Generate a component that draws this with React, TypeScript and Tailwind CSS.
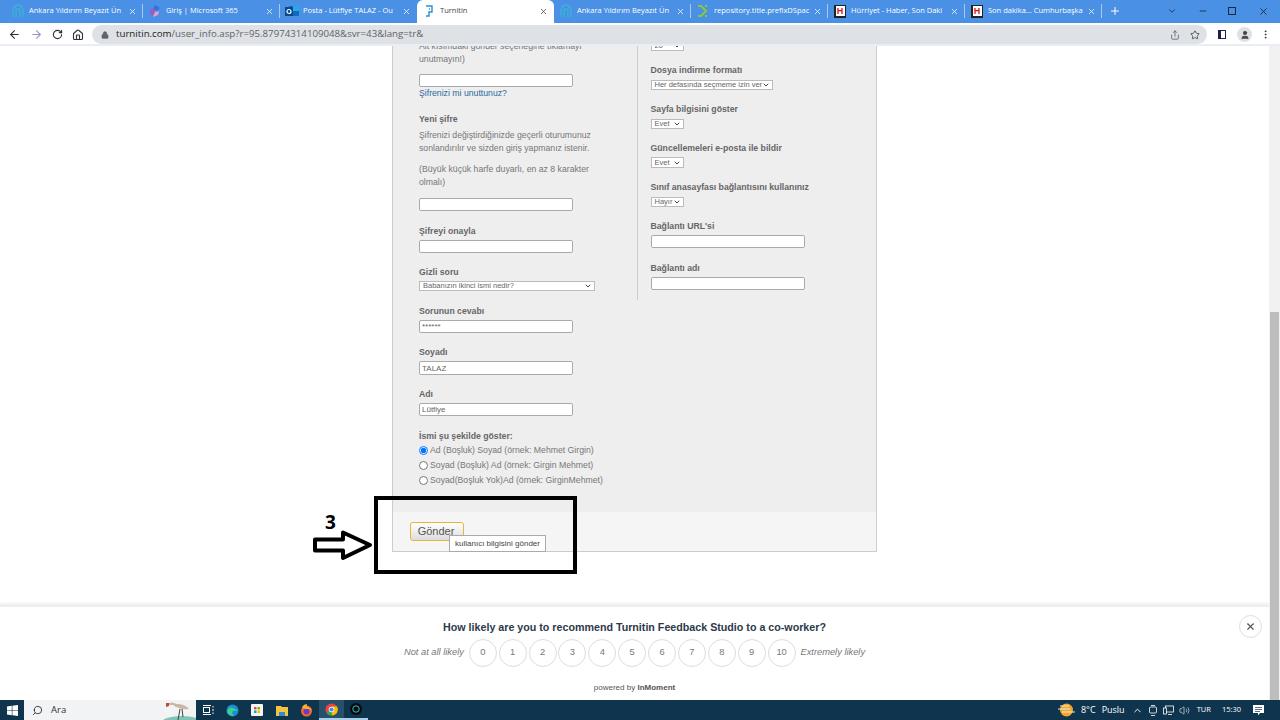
import { ReactNode } from 'react';
import { ArrowLeft, ArrowRight, ChevronDown, ChevronUp, Home, Lock, Minus, MoreVertical, Plus, RotateCw, Search, Share, Star, User, Volume2, X } from 'lucide-react';

const arial = { fontFamily: '"Liberation Sans", Arial, sans-serif' };

function ArchIcon() {
  return (
    <svg width="14" height="14" viewBox="0 0 14 14" fill="none" stroke="#37b6d6" strokeWidth="1.3">
      <path d="M2 13V6a5 5 0 0 1 10 0v7" />
      <path d="M5 13V7a2 2 0 0 1 4 0v6" />
    </svg>
  );
}

function M365Icon() {
  return (
    <svg width="14" height="14" viewBox="0 0 14 14">
      <path d="M7 1 12 4 9 7 5 5Z" fill="#3b6fd8" />
      <path d="M2 5 5 5 7 8 4 12 2 9Z" fill="#a05ac8" />
      <path d="M7 8 11 7 10 11 5 13Z" fill="#e8a0c8" />
    </svg>
  );
}

function OutlookIcon() {
  return (
    <svg width="14" height="14" viewBox="0 0 14 14">
      <rect x="4" y="2" width="10" height="10" fill="#0f6cbd" />
      <rect x="8" y="2" width="6" height="5" fill="#28a8ea" />
      <rect x="0" y="3" width="8" height="9" fill="#0a4a8c" />
      <circle cx="4" cy="7.5" r="2" fill="none" stroke="#fff" strokeWidth="1.2" />
    </svg>
  );
}

function TurnitinIcon() {
  return (
    <svg width="14" height="14" viewBox="0 0 14 14" fill="none" stroke="#2a8fd8" strokeWidth="1.4">
      <path d="M4 2h6v6H7v4H4" />
      <path d="M7 5h1" />
    </svg>
  );
}

function DspaceIcon() {
  return (
    <svg width="14" height="14" viewBox="0 0 14 14" fill="none" stroke="#8cc63f" strokeWidth="2">
      <path d="M2 2h3l5 5-5 5H2" />
      <path d="M9 2h2M11 12H9" />
    </svg>
  );
}

function HurriyetIcon() {
  return (
    <div className="w-[12px] h-[13px] bg-[#222] flex items-center justify-center">
      <div className="w-[9px] h-[10px] bg-white flex items-center justify-center text-[9px] leading-none font-bold text-[#d9131d]" style={arial}>
        H
      </div>
    </div>
  );
}

const tabs: { title: string; icon: ReactNode; active?: boolean; sep?: boolean }[] = [
  { title: 'Ankara Yıldırım Beyazıt Ün', icon: <ArchIcon />, sep: true },
  { title: 'Giriş | Microsoft 365', icon: <M365Icon />, sep: true },
  { title: 'Posta - Lütfiye TALAZ - Ou', icon: <OutlookIcon /> },
  { title: 'Turnitin', icon: <TurnitinIcon />, active: true },
  { title: 'Ankara Yıldırım Beyazıt Ün', icon: <ArchIcon />, sep: true },
  { title: 'repository.title.prefixDSpac', icon: <DspaceIcon />, sep: true },
  { title: 'Hürriyet - Haber, Son Daki', icon: <HurriyetIcon />, sep: true },
  { title: 'Son dakika... Cumhurbaşka', icon: <HurriyetIcon />, sep: true },
];

function BrowserChrome() {
  return (
    <div className="shrink-0" style={{ fontFamily: '"Open Sans", "Noto Sans", sans-serif' }}>
      <div className="h-[23px] bg-[#4a90e5] flex items-start pl-[6px]">
        {tabs.map((tab, i) => (
          <div
            key={i}
            className={`w-[137px] h-[23px] pb-[1px] flex items-center pl-[5px] rounded-t-[6px] ${
              tab.active ? 'bg-white text-[#444]' : 'text-white'
            }`}
          >
            <div className="w-[14px] flex justify-center shrink-0">{tab.icon}</div>
            <div className="ml-[4px] w-[98px] shrink-0 text-[7.5px] whitespace-nowrap">{tab.title}</div>
            <X size={9} strokeWidth={2} className="shrink-0 ml-[1px] mr-[5px]" />
            <div className={`w-px h-[14px] shrink-0 ${tab.sep ? 'bg-[#a8c8f0]' : ''}`} />
          </div>
        ))}
        <div className="w-[26px] h-[22px] flex items-center justify-center text-white">
          <Plus size={12} strokeWidth={2} />
        </div>
        <div className="flex-1 flex items-center justify-end h-[22px] pr-[11px] text-[#1c2a3a]">
          <ChevronDown size={10} className="mr-[21px]" />
          <Minus size={10} className="mr-[20px]" />
          <div className="w-[8px] h-[8px] border border-[#1c2a3a] mr-[22px]" />
          <X size={11} />
        </div>
      </div>
      <div className="h-[21px] bg-white flex items-start pl-[8px] pt-[2px]">
        <div className="h-[19px] flex items-center text-[#333]">
          <ArrowLeft size={13} strokeWidth={2} />
          <ArrowRight size={13} strokeWidth={2} className="ml-[9px] text-[#9c94c4]" />
          <RotateCw size={11} strokeWidth={2.4} className="ml-[9px]" />
          <Home size={12} strokeWidth={2.2} className="ml-[9px]" />
        </div>
        <div className="ml-[8px] w-[1115px] h-[19px] bg-[#dee1e6] rounded-l-[10px] rounded-r-[10px] flex items-center pl-[9px] pr-[7px] text-[#5f6368]">
          <Lock size={8} fill="#5f6368" />
          <div className="ml-[7px] flex-1 text-[9.7px] whitespace-nowrap">
            <span className="text-[#222]">turnitin.com</span>/user_info.asp?r=95.87974314109048&svr=43&lang=tr&
          </div>
          <Share size={10} />
          <Star size={10} className="ml-[10px] text-[#444]" />
        </div>
        <div className="ml-[11px] h-[19px] flex items-center">
          <div className="w-[8px] h-[9px] border-[1.5px] border-[#1b1f4a] border-l-[3px] bg-white" />
          <div className="ml-[11px] w-[15px] h-[15px] rounded-full bg-[#dee1e6] flex items-center justify-center">
            <User size={10} fill="#444" className="text-[#444]" />
          </div>
          <MoreVertical size={11} className="ml-[8px] text-[#333]" />
        </div>
      </div>
      <div className="h-[2px] bg-[#e9edf6]" />
    </div>
  );
}

function Label({ children, className = '' }: { children: ReactNode; className?: string }) {
  return <div className={`h-[13px] leading-[13px] text-[8.7px] font-bold text-[#666] whitespace-nowrap ${className}`}>{children}</div>;
}

function Note({ children, className = '' }: { children: ReactNode; className?: string }) {
  return <div className={`h-[13px] leading-[13px] text-[8.7px] text-[#777] whitespace-nowrap ${className}`}>{children}</div>;
}

function TextBox({ value = '', className = 'h-[13px]' }: { value?: string; className?: string }) {
  return (
    <input
      readOnly
      value={value}
      className={`block w-[154px] bg-white border border-[#aaa] rounded-[2px] px-[2px] text-[8px] text-[#666] outline-none ${className}`}
    />
  );
}

function Dropdown({ value, className }: { value: string; className: string }) {
  return (
    <div className={`flex items-center justify-between bg-white border border-[#bbb] pl-[3px] pr-[2px] text-[7.5px] leading-none text-[#666] whitespace-nowrap ${className}`}>
      <span>{value}</span>
      <ChevronDown size={8} strokeWidth={3} className="text-[#444] shrink-0" />
    </div>
  );
}

function Radio({ label, checked }: { label: string; checked?: boolean }) {
  return (
    <label className="h-[15px] flex items-center gap-[2px] text-[8.7px] text-[#777] whitespace-nowrap">
      <input type="radio" readOnly checked={!!checked} className="w-[9px] h-[9px] m-0 accent-[#0075ff]" />
      <span>{label}</span>
    </label>
  );
}

function AccountForm() {
  return (
    <div className="-mt-[6px] ml-[392px] w-[485px] border border-t-0 border-[#ccc] bg-[#f5f5f5]" style={arial}>
      <div className="bg-[#eeeeee] flex items-start">
        <div className="w-[244px] pl-[26px] pb-[24px]">
          <Note>Alt kısımdaki gönder seçeneğine tıklamayı</Note>
          <Note>unutmayın!)</Note>
          <TextBox className="h-[13px] mt-[8px]" />
          <div className="h-[13px] leading-[13px] text-[8.7px] text-[#2a6a9e]">Şifrenizi mi unuttunuz?</div>
          <Label className="mt-[13px]">Yeni şifre</Label>
          <Note className="mt-[3px]">Şifrenizi değiştirdiğinizde geçerli oturumunuz</Note>
          <Note>sonlandırılır ve sizden giriş yapmanız istenir.</Note>
          <Note className="mt-[8px]">(Büyük küçük harfe duyarlı, en az 8 karakter</Note>
          <Note>olmalı)</Note>
          <TextBox className="h-[13px] mt-[9px]" />
          <Label className="mt-[14px]">Şifreyi onayla</Label>
          <TextBox className="h-[13px] mt-[2px]" />
          <Label className="mt-[13px]">Gizli soru</Label>
          <Dropdown value="Babanızın ikinci ismi nedir?" className="w-[176px] h-[10px] mt-[2px]" />
          <Label className="mt-[14px]">Sorunun cevabı</Label>
          <TextBox value="******" className="h-[13px] mt-[2px]" />
          <Label className="mt-[13px]">Soyadı</Label>
          <TextBox value="TALAZ" className="h-[14px] mt-[2px]" />
          <Label className="mt-[13px]">Adı</Label>
          <TextBox value="Lütfiye" className="h-[13px] mt-[2px]" />
          <Label className="mt-[14px]">İsmi şu şekilde göster:</Label>
          <Radio checked label="Ad (Boşluk) Soyad (örnek: Mehmet Girgin)" />
          <Radio label="Soyad (Boşluk) Ad (örnek: Girgin Mehmet)" />
          <Radio label="Soyad(Boşluk Yok)Ad (örnek: GirginMehmet)" />
        </div>
        <div className="border-l border-[#ccc] pl-[13px] pb-[10px] w-[240px]">
          <Dropdown value="20" className="w-[33px] h-[11px]" />
          <Label className="mt-[13px]">Dosya indirme formatı</Label>
          <Dropdown value="Her defasında seçmeme izin ver" className="w-[122px] h-[10px] mt-[3px]" />
          <Label className="mt-[13px]">Sayfa bilgisini göster</Label>
          <Dropdown value="Evet" className="w-[33px] h-[10px] mt-[3px]" />
          <Label className="mt-[13px]">Güncellemeleri e-posta ile bildir</Label>
          <Dropdown value="Evet" className="w-[33px] h-[11px] mt-[2px]" />
          <Label className="mt-[13px]">Sınıf anasayfası bağlantısını kullanınız</Label>
          <Dropdown value="Hayır" className="w-[33px] h-[10px] mt-[3px]" />
          <Label className="mt-[13px]">Bağlantı URL'si</Label>
          <TextBox className="h-[13px] mt-[2px]" />
          <Label className="mt-[14px]">Bağlantı adı</Label>
          <TextBox className="h-[13px] mt-[2px]" />
        </div>
      </div>
      <div className="h-[39px] pl-[17px] pt-[10px] relative">
        <button className="block w-[54px] h-[19px] pr-[2px] rounded-[3px] border border-[#e6b63c] bg-gradient-to-b from-white to-[#dddddd] text-[11px] leading-[17px] text-[#555]">
          Gönder
        </button>
        <div className="absolute left-[56px] top-[23px] w-[97px] h-[17px] bg-white border border-[#aaa] text-[8px] text-[#444] flex items-center justify-center whitespace-nowrap">
          kullanıcı bilgisini gönder
        </div>
      </div>
    </div>
  );
}

function Annotation() {
  return (
    <>
      <div className="absolute left-[374px] top-[450px] w-[203px] h-[78px] border-[4px] border-black" />
      <div className="absolute left-[325px] top-[467px] text-[19px] leading-none font-bold text-black" style={{ fontFamily: '"Open Sans", sans-serif' }}>
        3
      </div>
      <svg className="absolute left-[312px] top-[484px]" width="62" height="32" viewBox="0 0 62 32" fill="none">
        <path d="M3 9.500H31V2.500L58 15 31 28V20.500H3Z" fill="#fff" stroke="#000" strokeWidth="4" strokeLinejoin="round" />
      </svg>
    </>
  );
}

function Survey() {
  return (
    <div className="absolute left-0 right-0 bottom-0 h-[95px] bg-white border-t-[2px] border-[#eeeeee] shadow-[0_-2px_2px_#f0f0f0] flex flex-col items-center" style={arial}>
      <div className="mt-[13px] h-[14px] leading-[14px] text-[10.7px] font-bold text-[#2b3a4a]">
        How likely are you to recommend Turnitin Feedback Studio to a co-worker?
      </div>
      <div className="mt-[5px] flex items-center text-[9.300px] text-[#777]">
        <span className="italic mr-[4px]">Not at all likely</span>
        {[0, 1, 2, 3, 4, 5, 6, 7, 8, 9, 10].map((n) => (
          <div key={n} className="w-[28px] h-[28px] mx-[0.95px] rounded-full border border-[#ddd] flex items-center justify-center">
            {n}
          </div>
        ))}
        <span className="italic ml-[4px]">Extremely likely</span>
      </div>
      <div className="mt-[15px] text-[8px] text-[#555]">
        powered by <span className="font-bold">InMoment</span>
      </div>
      <div className="absolute left-[1239px] top-[8px] w-[23px] h-[23px] rounded-full border border-[#ddd] flex items-center justify-center text-[#555]">
        <X size={11} strokeWidth={2.5} />
      </div>
    </div>
  );
}

function Taskbar() {
  return (
    <div className="h-[20px] shrink-0 bg-[#0f344d] flex items-center text-white" style={{ fontFamily: '"Open Sans", sans-serif' }}>
      <div className="w-[24px] flex justify-center">
        <svg width="11" height="11" viewBox="0 0 11 11" fill="#fff">
          <path d="M0 1.500 4.800.8v4.400H0ZM5.400.7 11 0v5.200H5.400ZM0 5.800h4.800v4.400L0 9.500ZM5.400 5.800H11V11l-5.600-.8Z" />
        </svg>
      </div>
      <div className="w-[172px] h-[20px] bg-[#f1f3f5] flex items-center pl-[8px] text-[#333] relative overflow-hidden">
        <Search size={11} className="-scale-x-100" />
        <span className="ml-[8px] text-[9.500px]">Ara</span>
        <svg className="absolute right-0 top-0" width="36" height="20" viewBox="0 0 36 20">
          <ellipse cx="22" cy="22" rx="20" ry="6" fill="#7fc4b4" />
          <path d="M7 4q4-3 10 0 8 0 12 5-6 1-10-1-4-1-6-3l-4 0Z" fill="#c9b8a4" />
          <path d="M6 3l3 0 0 3-3 1Z" fill="#c8433a" />
          <path d="M20 9l-2 11M22 9l1 8" stroke="#444" strokeWidth="1" />
        </svg>
      </div>
      <div className="w-[24px] flex justify-center">
        <svg width="12" height="10" viewBox="0 0 12 10" fill="none" stroke="#fff">
          <rect x="1.500" y="2.500" width="6" height="5" />
          <path d="M1 .5h8M1 9.500h8M11 1v1.500M11 4v2M11 7.500V9" />
        </svg>
      </div>
      <div className="w-[25px] flex justify-center">
        <svg width="13" height="13" viewBox="0 0 13 13">
          <circle cx="6.500" cy="6.500" r="6" fill="#1a8fd8" />
          <path d="M1 8q2-6 6-4 3 1 5 3-3-1-5 0-2 2 1 5Q3 12 1 8Z" fill="#3cd08c" />
        </svg>
      </div>
      <div className="w-[24px] flex justify-center">
        <svg width="12" height="12" viewBox="0 0 12 12">
          <rect width="12" height="12" rx="1" fill="#f4f4f4" />
          <rect x="3" y="3" width="2.500" height="2.500" fill="#f25022" />
          <rect x="6.500" y="3" width="2.500" height="2.500" fill="#7fba00" />
          <rect x="3" y="6.500" width="2.500" height="2.500" fill="#00a4ef" />
          <rect x="6.500" y="6.500" width="2.500" height="2.500" fill="#ffb900" />
        </svg>
      </div>
      <div className="w-[25px] flex justify-center">
        <svg width="12" height="11" viewBox="0 0 12 11">
          <path d="M0 1h5l1 1h6v9H0Z" fill="#f5c242" />
          <rect x="3" y="7" width="6" height="4" fill="#2a8fd8" />
        </svg>
      </div>
      <div className="w-[25px] flex justify-center">
        <svg width="13" height="13" viewBox="0 0 13 13">
          <circle cx="6.500" cy="7" r="5.500" fill="#f2672a" />
          <circle cx="6.500" cy="7.500" r="3" fill="#6b3ac8" />
          <path d="M2 3q2-3 5-3-1 2 1 3 3 1 4 4-3-3-6-2-3 0-4-2Z" fill="#ffb52b" />
        </svg>
      </div>
      <div className="w-[25px] h-[20px] bg-[#29506b] border-b-[2px] border-[#a9d0ea] flex justify-center items-center">
        <svg width="13" height="13" viewBox="0 0 13 13">
          <circle cx="6.500" cy="6.500" r="6" fill="#e8453c" />
          <path d="M6.500 6.500 1.300 9.500A6 6 0 0 0 7 12.500Z" fill="#34a853" />
          <path d="M6.500 3.500h5.500a6 6 0 0 1-5 9Z" fill="#fbbc05" />
          <circle cx="6.500" cy="6.500" r="2.800" fill="#fff" />
          <circle cx="6.500" cy="6.500" r="2.100" fill="#4285f4" />
        </svg>
      </div>
      <div className="w-[24px] h-[20px] border-b-[2px] border-[#a9d0ea] flex justify-center items-center">
        <svg width="12" height="12" viewBox="0 0 12 12" fill="none">
          <circle cx="6" cy="6" r="6" fill="#0a0a0a" />
          <circle cx="6" cy="6" r="3.200" stroke="#23c4d8" strokeWidth="1" />
        </svg>
      </div>
      <div className="flex-1 flex items-center justify-end text-[9px]">
        <svg width="17" height="14" viewBox="0 0 17 14">
          <circle cx="8.500" cy="7" r="6.500" fill="#f4a62a" />
          <path d="M0 6h12M4 9h13M2 3h9" stroke="#e8e8e8" strokeWidth="1" />
        </svg>
        <span className="ml-[6px]">8°C</span>
        <span className="ml-[6px]">Puslu</span>
        <ChevronUp size={11} className="ml-[7px]" />
        <svg className="ml-[5px]" width="10" height="13" viewBox="0 0 10 13" fill="none" stroke="#fff" strokeWidth="0.8">
          <rect x="1.500" y="3" width="7" height="6" rx="1" />
          <path d="M3 1.500h4M3 11.500h4" />
        </svg>
        <svg className="ml-[5px]" width="11" height="11" viewBox="0 0 11 11" fill="none" stroke="#fff" strokeWidth="0.8">
          <rect x="2.500" y="1" width="8" height="6" />
          <rect x="0.500" y="3" width="3" height="6" fill="#0f344d" />
          <path d="M5 9.500h4" />
        </svg>
        <Volume2 size={11} strokeWidth={1.3} className="ml-[5px]" />
        <span className="ml-[7px] text-[7.500px]">TUR</span>
        <span className="ml-[11px] text-[7.500px]">15:30</span>
        <svg className="ml-[12px] mr-[16px]" width="11" height="11" viewBox="0 0 11 11">
          <path d="M0 0h11v8H7L5 10.500V8H0Z" fill="#fff" />
          <path d="M2 2.500h7M2 4.500h7M2 6.500h5" stroke="#0f344d" strokeWidth="0.700" />
        </svg>
      </div>
    </div>
  );
}

export default function App() {
  return (
    <div className="w-[1280px] h-[720px] flex flex-col overflow-hidden bg-white">
      <BrowserChrome />
      <div className="flex-1 min-h-0 flex">
        <div className="flex-1 min-w-0 relative overflow-hidden">
          <AccountForm />
          <Annotation />
          <Survey />
        </div>
        <div className="w-[11px] bg-[#f1f1f1] pt-[266px] pl-[1px] pr-[1px]">
          <div className="h-full bg-[#bdbdbd]" />
        </div>
      </div>
      <Taskbar />
    </div>
  );
}
